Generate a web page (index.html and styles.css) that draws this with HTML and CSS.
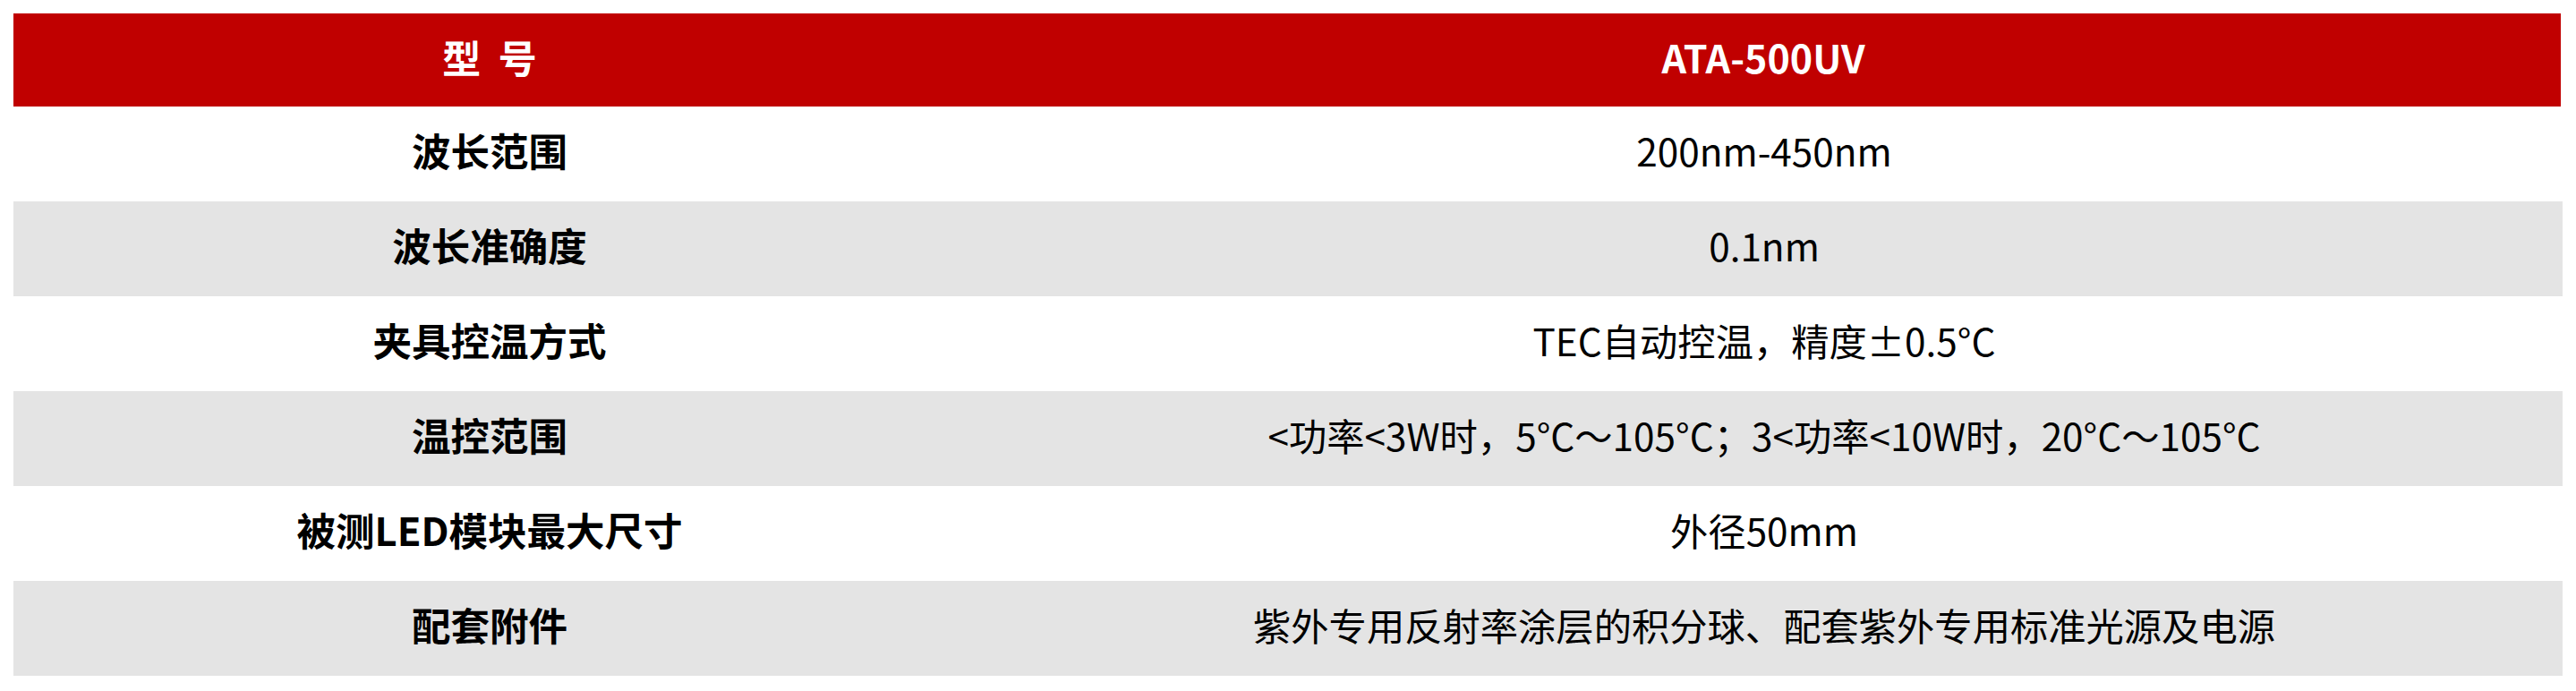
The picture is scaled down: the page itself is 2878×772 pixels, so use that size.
FILE: index.html
```html
<!DOCTYPE html>
<html lang="zh-CN">
<head>
<meta charset="utf-8">
<title>ATA-500UV</title>
<link rel="stylesheet" href="styles.css">
</head>
<body>
<div class="spec">
  <div class="row head">
    <div class="cell key">型&nbsp;&nbsp;号</div>
    <div class="cell val">ATA-500UV</div>
  </div>
  <div class="row">
    <div class="cell key">波长范围</div>
    <div class="cell val">200nm-450nm</div>
  </div>
  <div class="row alt">
    <div class="cell key">波长准确度</div>
    <div class="cell val">0.1nm</div>
  </div>
  <div class="row">
    <div class="cell key">夹具控温方式</div>
    <div class="cell val">TEC自动控温，精度±0.5°C</div>
  </div>
  <div class="row alt">
    <div class="cell key">温控范围</div>
    <div class="cell val">&lt;功率&lt;3W时，5°C～105°C；3&lt;功率&lt;10W时，20°C～105°C</div>
  </div>
  <div class="row">
    <div class="cell key">被测LED模块最大尺寸</div>
    <div class="cell val">外径50mm</div>
  </div>
  <div class="row alt">
    <div class="cell key">配套附件</div>
    <div class="cell val">紫外专用反射率涂层的积分球、配套紫外专用标准光源及电源</div>
  </div>
</div>
</body>
</html>
```
FILE: styles.css
```css
html, body {
  margin: 0;
  padding: 0;
  background: #ffffff;
}

body {
  font-family: "Noto Sans CJK SC", "Noto Sans", sans-serif;
  color: #000000;
}

.spec {
  padding: 15px 0 0 15px;
  width: 2848px;
  display: flex;
  flex-direction: column;
}

.row {
  display: grid;
  grid-template-columns: 1064px 1fr;
  height: 106px;
  background: #ffffff;
}

.row.alt {
  background: #e4e4e4;
}

.row.head {
  height: 104px;
  background: #c00000;
  color: #ffffff;
  margin-right: 2px;
}

.cell {
  display: flex;
  align-items: center;
  justify-content: center;
  box-sizing: border-box;
  padding-bottom: 8px;
  font-size: 43px;
  line-height: 1;
  white-space: nowrap;
}

.key {
  font-weight: 700;
  font-size: 43.5px;
}

.val {
  font-weight: 400;
  font-size: 42.3px;
}

.head .cell {
  font-weight: 700;
  font-size: 43px;
}
```
